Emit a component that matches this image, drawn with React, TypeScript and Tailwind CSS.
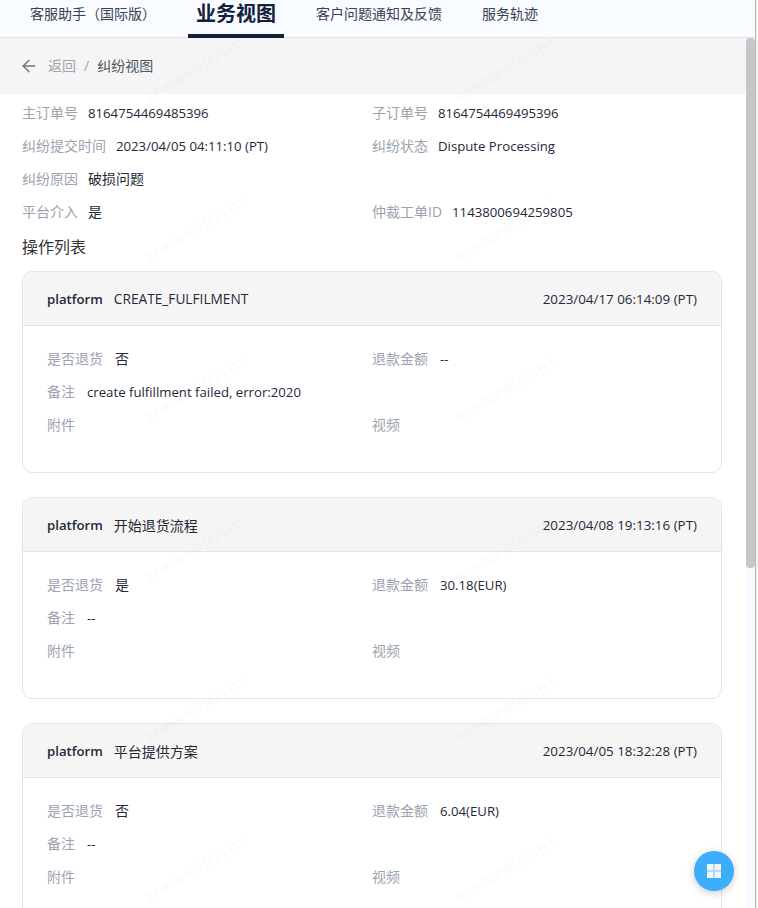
import { ArrowLeft } from "lucide-react";

const CJK = "font-['Open_Sans','Noto_Sans_CJK_SC',sans-serif]";

const TABS = [
  { label: "客服助手（国际版）" },
  { label: "业务视图", active: true },
  { label: "客户问题通知及反馈" },
  { label: "服务轨迹" },
];

const CARDS = [
  {
    action: "CREATE_FULFILMENT",
    time: "2023/04/17 06:14:09 (PT)",
    returned: "否",
    refund: "--",
    note: "create fulfillment failed, error:2020",
  },
  {
    action: "开始退货流程",
    time: "2023/04/08 19:13:16 (PT)",
    returned: "是",
    refund: "30.18(EUR)",
    note: "--",
  },
  {
    action: "平台提供方案",
    time: "2023/04/05 18:32:28 (PT)",
    returned: "否",
    refund: "6.04(EUR)",
    note: "--",
  },
];

const hasCjk = (s: string) => /[\u4e00-\u9fff]/.test(s);

function Field({ label, value, wide }: { label: string; value?: string; wide?: boolean }) {
  return (
    <div className={`flex h-[33px] items-center whitespace-nowrap text-sm ${wide ? "gap-3" : "gap-2.5"}`}>
      <span className="pb-0.5 text-[#9ca3af]">{label}</span>
      {value && (
        <span className={`text-[#1f2937] ${hasCjk(value) ? "pb-0.5 text-sm" : "text-[13.2px]"}`}>{value}</span>
      )}
    </div>
  );
}

function ActionCard({ card }: { card: (typeof CARDS)[number] }) {
  return (
    <div className="mb-6 h-[202px] shrink-0 overflow-hidden rounded-[10px] border border-[#e5e5e5]">
      <div className="flex h-[54px] items-center justify-between border-b border-[#e5e5e5] bg-[#f5f5f5] px-6 pt-0.5 text-[#1f2937]">
        <div className="flex items-center gap-[11px]">
          <span className="text-[13.2px] font-semibold">platform</span>
          <span className={hasCjk(card.action) ? "text-sm" : "text-[13.7px]"}>{card.action}</span>
        </div>
        <span className="text-[13.4px]">{card.time}</span>
      </div>
      <div className="grid grid-cols-[325px_1fr] px-6 pt-[17px]">
        <Field wide label="是否退货" value={card.returned} />
        <Field wide label="退款金额" value={card.refund} />
        <div className="col-span-2">
          <Field wide label="备注" value={card.note} />
        </div>
        <Field label="附件" />
        <Field label="视频" />
      </div>
    </div>
  );
}

export default function App() {
  return (
    <div className={`flex h-[908px] w-[758px] overflow-hidden bg-[#f5f5f5] ${CJK}`}>
      <div className="flex w-[756px] shrink-0 flex-col border-r border-[#b4b4b4] bg-white">
        <nav className="flex h-[38px] shrink-0 gap-10 border-b border-[#e5e5e5] bg-[#f8fbff] pl-[30px] text-sm text-[#374151]">
          {TABS.map((t) =>
            t.active ? (
              <div
                key={t.label}
                className="relative -mx-2 h-[38px] border-b-4 border-[#14213d] px-2 text-xl font-bold leading-[28px] text-[#14213d]"
              >
                {t.label}
              </div>
            ) : (
              <div key={t.label} className="leading-[28px]">
                {t.label}
              </div>
            ),
          )}
        </nav>

        <div className="flex min-h-0 flex-1">
          <div className="relative min-w-0 flex-1 overflow-hidden">
            <div className="flex h-14 items-center bg-[#f5f5f5] pl-[19px] text-sm">
              <ArrowLeft className="h-5 w-5 text-[#6b7280]" strokeWidth={1.6} />
              <span className="ml-[9px] text-[#9ca3af]">返回</span>
              <span className="mx-2 text-[#9ca3af]">/</span>
              <span className="text-[#4b5563]">纠纷视图</span>
            </div>

            <div className="px-[22px] pt-[3px]">
              <div className="grid grid-cols-[350px_1fr]">
                <Field label="主订单号" value="8164754469485396" />
                <Field label="子订单号" value="8164754469495396" />
                <Field label="纠纷提交时间" value="2023/04/05 04:11:10 (PT)" />
                <Field label="纠纷状态" value="Dispute Processing" />
                <div className="col-span-2">
                  <Field label="纠纷原因" value="破损问题" />
                </div>
                <Field label="平台介入" value="是" />
                <Field label="仲裁工单ID" value="1143800694259805" />
              </div>
              <h3 className="mb-3 mt-1.5 text-base font-normal leading-6 text-[#333333]">操作列表</h3>
              <div className="flex w-[700px] flex-col">
                {CARDS.map((c) => (
                  <ActionCard key={c.time} card={c} />
                ))}
              </div>
            </div>

            {/* watermark */}
            <div className="pointer-events-none absolute left-[42px] top-[-49px] grid grid-cols-[repeat(2,310px)] auto-rows-[160px]">
              {Array.from({ length: 12 }).map((_, i) => (
                <div key={i} className="flex items-center justify-center">
                  <span className="-rotate-30 whitespace-nowrap text-[12.5px] text-black/[0.06]">brunaviei01625451</span>
                </div>
              ))}
            </div>
          </div>

          {/* scrollbar */}
          <div className="w-[9px] shrink-0 bg-[#f8fbff]">
            <div className="h-[530px] rounded-[4px] bg-[#c4c7c9]" />
          </div>
        </div>
      </div>

      <button className="absolute left-[694px] top-[851px] flex h-10 w-10 items-center justify-center rounded-full bg-[#3eaefc] shadow-[0_2px_8px_rgba(0,0,0,0.2)]">
        <svg width="14" height="14" viewBox="0 0 14 14">
          <rect width="14" height="14" fill="#a5d8fd" />
          <rect width="6.2" height="6.2" fill="#f3f4f6" />
          <rect x="7.8" width="6.2" height="6.2" fill="#f3f4f6" />
          <rect y="7.8" width="6.2" height="6.2" fill="#f3f4f6" />
          <rect x="7.8" y="7.8" width="6.2" height="6.2" fill="#f3f4f6" />
        </svg>
      </button>
    </div>
  );
}
